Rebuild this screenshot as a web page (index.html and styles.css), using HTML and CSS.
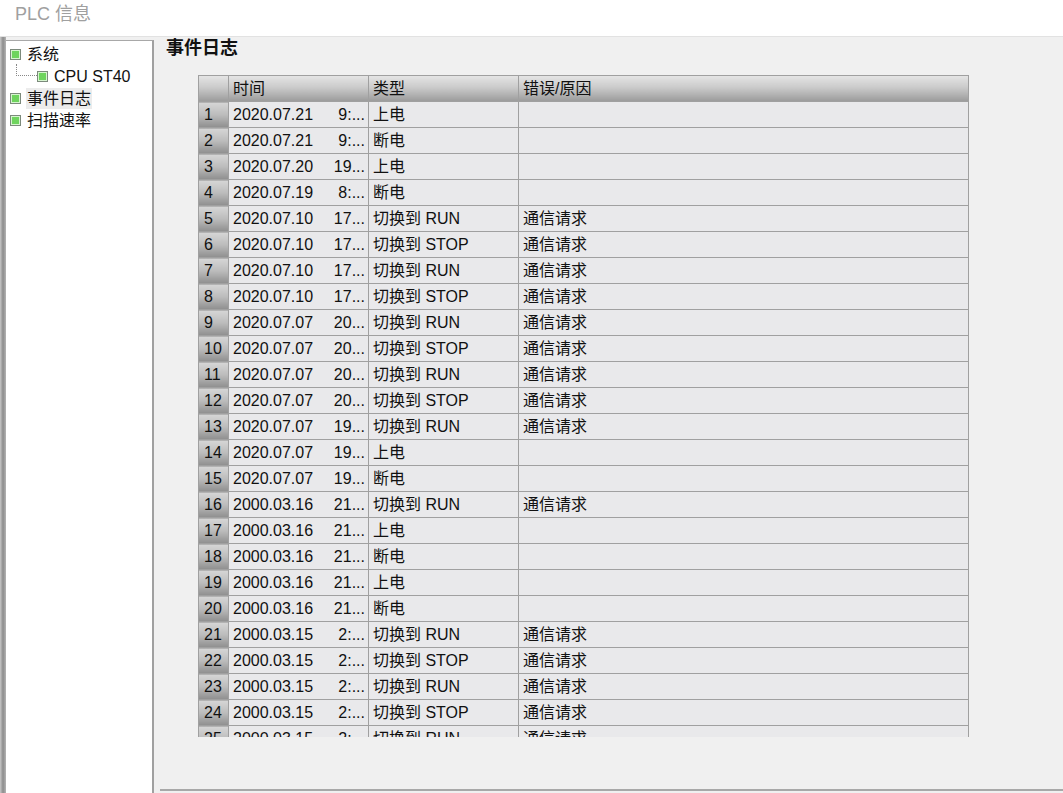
FILE: index.html
```html
<!DOCTYPE html>
<html>
<head>
    <link rel="stylesheet" href="styles.css">
</head>
<body>
    <div class="titlebar">PLC 信息</div>

    <div class="main">
        <div class="edge"></div>
        <div class="tree">
            <div class="node"><span class="leaf"></span><span class="label">系统</span></div>
            <div class="node child"><span class="branch"></span><span class="leaf"></span><span class="label">CPU ST40</span></div>
            <div class="node"><span class="leaf"></span><span class="label selected">事件日志</span></div>
            <div class="node"><span class="leaf"></span><span class="label">扫描速率</span></div>
        </div>

        <div class="content">
            <h1>事件日志</h1>
            <div class="grid-wrap">
                <table class="grid">
                    <colgroup>
                        <col class="c-num"><col class="c-time"><col class="c-type"><col class="c-err">
                    </colgroup>
                    <thead>
                        <tr><th></th><th>时间</th><th>类型</th><th>错误/原因</th></tr>
                    </thead>
                    <tbody>
                        <tr><th>1</th><td><div class="time"><span>2020.07.21</span><span>9:...</span></div></td><td>上电</td><td></td></tr>
                        <tr><th>2</th><td><div class="time"><span>2020.07.21</span><span>9:...</span></div></td><td>断电</td><td></td></tr>
                        <tr><th>3</th><td><div class="time"><span>2020.07.20</span><span>19...</span></div></td><td>上电</td><td></td></tr>
                        <tr><th>4</th><td><div class="time"><span>2020.07.19</span><span>8:...</span></div></td><td>断电</td><td></td></tr>
                        <tr><th>5</th><td><div class="time"><span>2020.07.10</span><span>17...</span></div></td><td>切换到 RUN</td><td>通信请求</td></tr>
                        <tr><th>6</th><td><div class="time"><span>2020.07.10</span><span>17...</span></div></td><td>切换到 STOP</td><td>通信请求</td></tr>
                        <tr><th>7</th><td><div class="time"><span>2020.07.10</span><span>17...</span></div></td><td>切换到 RUN</td><td>通信请求</td></tr>
                        <tr><th>8</th><td><div class="time"><span>2020.07.10</span><span>17...</span></div></td><td>切换到 STOP</td><td>通信请求</td></tr>
                        <tr><th>9</th><td><div class="time"><span>2020.07.07</span><span>20...</span></div></td><td>切换到 RUN</td><td>通信请求</td></tr>
                        <tr><th>10</th><td><div class="time"><span>2020.07.07</span><span>20...</span></div></td><td>切换到 STOP</td><td>通信请求</td></tr>
                        <tr><th>11</th><td><div class="time"><span>2020.07.07</span><span>20...</span></div></td><td>切换到 RUN</td><td>通信请求</td></tr>
                        <tr><th>12</th><td><div class="time"><span>2020.07.07</span><span>20...</span></div></td><td>切换到 STOP</td><td>通信请求</td></tr>
                        <tr><th>13</th><td><div class="time"><span>2020.07.07</span><span>19...</span></div></td><td>切换到 RUN</td><td>通信请求</td></tr>
                        <tr><th>14</th><td><div class="time"><span>2020.07.07</span><span>19...</span></div></td><td>上电</td><td></td></tr>
                        <tr><th>15</th><td><div class="time"><span>2020.07.07</span><span>19...</span></div></td><td>断电</td><td></td></tr>
                        <tr><th>16</th><td><div class="time"><span>2000.03.16</span><span>21...</span></div></td><td>切换到 RUN</td><td>通信请求</td></tr>
                        <tr><th>17</th><td><div class="time"><span>2000.03.16</span><span>21...</span></div></td><td>上电</td><td></td></tr>
                        <tr><th>18</th><td><div class="time"><span>2000.03.16</span><span>21...</span></div></td><td>断电</td><td></td></tr>
                        <tr><th>19</th><td><div class="time"><span>2000.03.16</span><span>21...</span></div></td><td>上电</td><td></td></tr>
                        <tr><th>20</th><td><div class="time"><span>2000.03.16</span><span>21...</span></div></td><td>断电</td><td></td></tr>
                        <tr><th>21</th><td><div class="time"><span>2000.03.15</span><span>2:...</span></div></td><td>切换到 RUN</td><td>通信请求</td></tr>
                        <tr><th>22</th><td><div class="time"><span>2000.03.15</span><span>2:...</span></div></td><td>切换到 STOP</td><td>通信请求</td></tr>
                        <tr><th>23</th><td><div class="time"><span>2000.03.15</span><span>2:...</span></div></td><td>切换到 RUN</td><td>通信请求</td></tr>
                        <tr><th>24</th><td><div class="time"><span>2000.03.15</span><span>2:...</span></div></td><td>切换到 STOP</td><td>通信请求</td></tr>
                        <tr><th>25</th><td><div class="time"><span>2000.03.15</span><span>2:...</span></div></td><td>切换到 RUN</td><td>通信请求</td></tr>
                    </tbody>
                </table>
            </div>
            <div class="footer">
                <div class="footer-box"></div>
            </div>
        </div>
    </div>
</body>
</html>
```

FILE: styles.css
```css
body {
    font-family: "Liberation Sans", "Noto Sans CJK SC", sans-serif;
    font-size: 16px;
    color: #111;
    margin: 0;
    background: #f0f0f0;
    height: 793px;
    overflow: hidden;
}

.titlebar {
    height: 36px;
    line-height: 28px;
    background: #fff;
    color: #a0a0a0;
    font-size: 18px;
    padding-left: 15px;
    border-bottom: 1px solid #e2e2e2;
}

.main {
    display: flex;
    height: 756px;
}

.edge {
    width: 6px;
    background: linear-gradient(to right, #c8c8c8, #8c8c8c 50%, #b4b4b4);
}

/* tree */
.tree {
    width: 148px;
    margin-top: 3px;
    background: #fff;
    border-top: 1px solid #a8a8a8;
    border-right: 2px solid #a0a0a0;
    box-sizing: border-box;
    padding-top: 2px;
}

.node {
    display: flex;
    align-items: center;
    height: 22px;
    padding-left: 4px;
}

.node.child {
    padding-left: 10px;
}

.branch {
    width: 21px;
    height: 12px;
    margin-top: -12px;
    border-left: 1px dotted #888;
    border-bottom: 1px dotted #888;
    box-sizing: border-box;
}

.leaf {
    width: 11px;
    height: 11px;
    box-sizing: border-box;
    border: 1px solid #7c8a7c;
    background: #6fd45e;
    box-shadow: inset 0 0 0 1px #d6f5cf;
    margin-right: 5px;
}

.label {
    padding: 0 1px;
    line-height: 21px;
}

.label.selected {
    background: #ececec;
}

/* content */
.content {
    flex: 1;
    display: flex;
    flex-direction: column;
}

h1 {
    font-size: 18px;
    font-weight: bold;
    margin: 0;
    padding: 0 0 0 12px;
    height: 38px;
    line-height: 22px;
}

.grid-wrap {
    margin-left: 44px;
    width: 771px;
    height: 662px;
    overflow: hidden;
    border-right: 1px solid #a0a0a0;
    border-top: 1px solid #a0a0a0;
    box-sizing: border-box;
}

.grid {
    border-collapse: collapse;
    table-layout: fixed;
    width: 770px;
    background: #e9e9eb;
}

.c-num { width: 30px; }
.c-time { width: 140px; }
.c-type { width: 150px; }
.c-err { width: 450px; }

.grid th,
.grid td {
    height: 25px;
    padding: 0 0 0 4px;
    line-height: 20px;
    border: 1px solid #a0a0a0;
    text-align: left;
    font-weight: normal;
    white-space: nowrap;
    overflow: hidden;
}

.grid tr:first-child th,
.grid tr:first-child td {
    border-top: none;
}

.grid thead th {
    background: linear-gradient(to bottom, #e4e4e4, #cbcbcb 45%, #9c9c9c);
}

.grid tbody th {
    background: linear-gradient(to bottom, #d6d6d6, #bcbcbc 50%, #8e8e8e);
    padding-left: 5px;
}

.grid tr > :first-child {
    border-left: 1px solid #a0a0a0;
}

.time {
    display: flex;
    justify-content: space-between;
    padding-right: 3px;
}

.footer {
    flex: 1;
    display: flex;
    align-items: flex-end;
    padding-left: 6px;
}

.footer-box {
    flex: 1;
    height: 2px;
    border-top: 2px solid #a8a8a8;
}
```
